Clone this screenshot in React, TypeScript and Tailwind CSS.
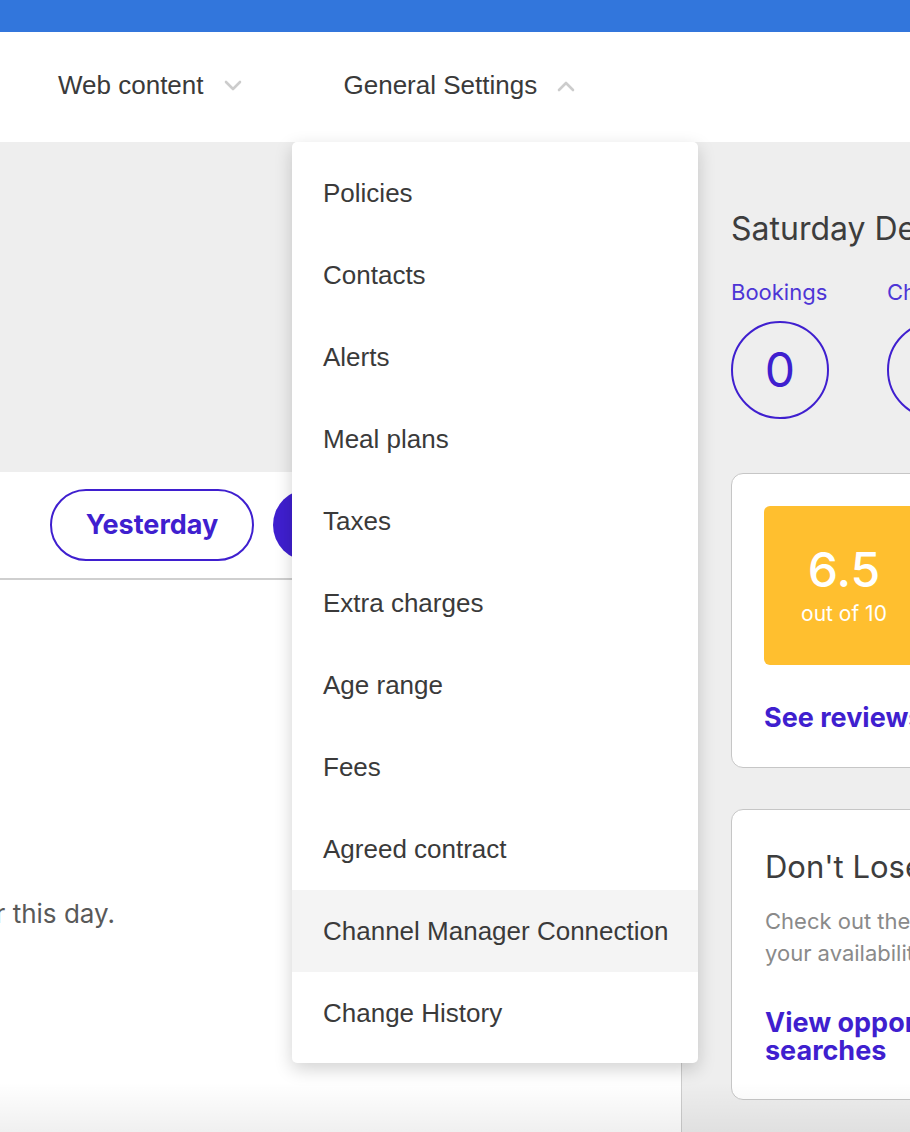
import React from "react";

const items = [
  "Policies",
  "Contacts",
  "Alerts",
  "Meal plans",
  "Taxes",
  "Extra charges",
  "Age range",
  "Fees",
  "Agreed contract",
  "Channel Manager Connection",
  "Change History",
];

function Chevron({ up }: { up?: boolean }) {
  return (
    <svg width="18" height="12" viewBox="0 0 18 12" fill="none" className="shrink-0">
      <polyline
        points={up ? "2,10 9,3 16,10" : "2,2 9,9 16,2"}
        stroke="#cccccc"
        strokeWidth="2.6"
        strokeLinecap="round"
        strokeLinejoin="round"
      />
    </svg>
  );
}

export default function App() {
  return (
    <div className="relative w-[910px] h-[1132px] overflow-hidden bg-white font-['Inter',sans-serif]">
      <div className="h-[32px] bg-[#3276dc]" />
      <nav className="h-[110px] flex items-center pl-[58px] pb-[3px] font-['Liberation_Sans',Arial,sans-serif] text-[26px] text-[#3a3a3a]">
        <div className="flex items-center gap-[20px]">
          <span>Web content</span>
          <Chevron />
        </div>
        <div className="flex items-center gap-[20px] ml-[102px]">
          <span>General Settings</span>
          <Chevron up />
        </div>
      </nav>

      <div className="flex h-[990px]">
        <div className="w-[681px] shrink-0 flex flex-col bg-white">
          <div className="h-[330px] bg-[#eeeeee]" />
          <div className="h-[108px] border-b-2 border-[#cfcfcf] flex items-center pl-[50px] gap-[19px]">
            <div className="w-[204px] h-[72px] rounded-full border-2 border-[#3f1fcf] flex items-center justify-center text-[27px] font-bold text-[#3f1fcf]">
              Yesterday
            </div>
            <div className="w-[180px] h-[72px] rounded-full bg-[#3f1fcf] flex items-center justify-center text-[27px] font-bold text-white">
              Today
            </div>
          </div>
          <div className="pt-[316px] w-[115px] flex justify-end">
            <span className="whitespace-nowrap text-[26px] leading-[36px] text-[#595959]">
              There were no bookings for this day.
            </span>
          </div>
        </div>

        <aside className="flex-1 bg-[#eeeeee] border-l border-[#cccccc] pl-[49px] pt-[67px] whitespace-nowrap">
          <div className="text-[32px] leading-[40px] text-[#3d3d3d]">Saturday December 14</div>
          <div className="flex gap-[58px] mt-[29px]">
            <div className="flex flex-col w-[98px]">
              <div className="text-[22px] leading-[28px] text-[#4d35d6]">Bookings</div>
              <div className="mt-[15px] w-[98px] h-[98px] rounded-full border-2 border-[#3f1fcf] flex items-center justify-center text-[48px] text-[#3f1fcf]">
                0
              </div>
            </div>
            <div className="flex flex-col w-[98px]">
              <div className="text-[22px] leading-[28px] text-[#4d35d6]">Check-ins</div>
              <div className="mt-[15px] w-[98px] h-[98px] rounded-full border-2 border-[#3f1fcf] flex items-center justify-center text-[48px] text-[#3f1fcf]">
                0
              </div>
            </div>
          </div>

          <div className="mt-[54px] w-[340px] h-[295px] bg-white border border-[#c6c6c6] rounded-[12px] pt-[32px] pl-[32px]">
            <div className="w-[160px] h-[159px] bg-[#ffbf2f] rounded-[6px] flex flex-col items-center justify-center text-white">
              <div className="text-[48px] leading-[52px] font-medium">6.5</div>
              <div className="mt-[4px] text-[21px] leading-[28px]">out of 10</div>
            </div>
            <div className="mt-[37px] text-[27px] leading-[32px] font-bold text-[#3f1fcf]">See reviews</div>
          </div>

          <div className="mt-[41px] w-[340px] h-[291px] bg-white border border-[#c6c6c6] rounded-[12px] pt-[37px] pl-[33px]">
            <div className="text-[31px] leading-[40px] text-[#3d3d3d]">Don't Lose Out</div>
            <div className="mt-[18px] text-[22px] leading-[32px] text-[#8a8a8a]">
              Check out the searches
              <br />
              your availability
            </div>
            <div className="mt-[40px] text-[27px] leading-[28px] font-bold text-[#3f1fcf]">
              View opportunity
              <br />
              searches
            </div>
          </div>
        </aside>
      </div>

      <div className="absolute left-0 right-0 bottom-0 h-[50px] bg-gradient-to-b from-transparent to-black/[0.06] pointer-events-none" />

      <div className="absolute left-[292px] top-[142px] w-[406px] bg-white rounded-[5px] shadow-[0_6px_18px_rgba(0,0,0,0.18)] pt-[10px] pb-[9px] font-['Liberation_Sans',Arial,sans-serif] text-[26px] text-[#3a3a3a]">
        {items.map((it) => (
          <div
            key={it}
            className={
              "h-[82px] flex items-center pl-[31px] whitespace-nowrap " +
              (it === "Channel Manager Connection" ? "bg-[#f4f4f4]" : "")
            }
          >
            {it}
          </div>
        ))}
      </div>
    </div>
  );
}
